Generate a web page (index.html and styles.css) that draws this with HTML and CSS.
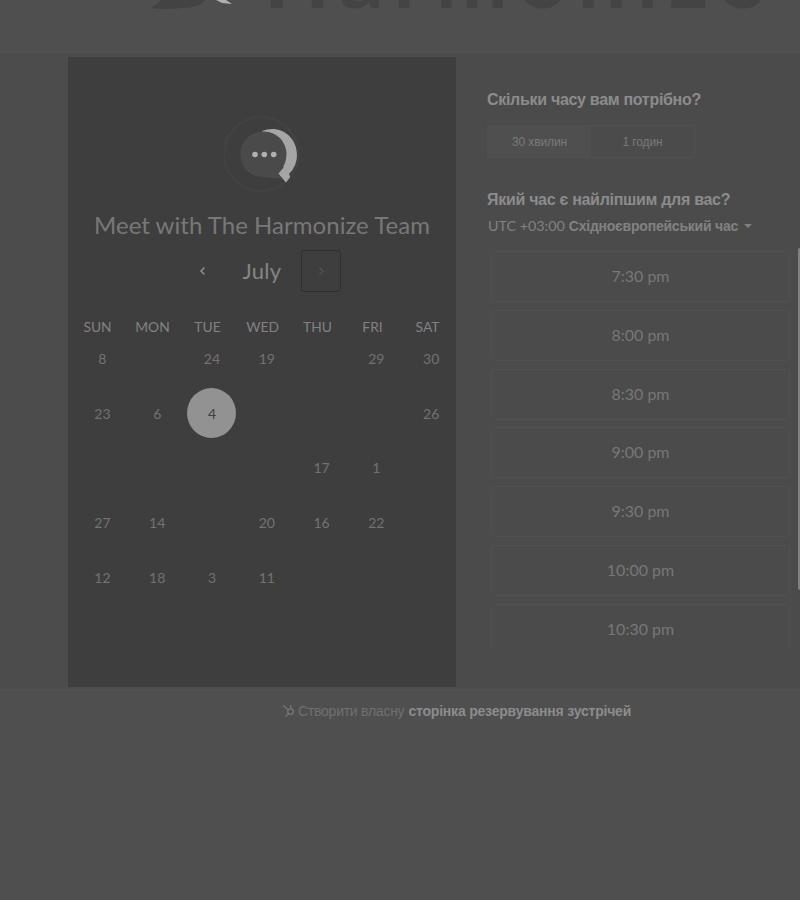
FILE: index.html
```
<!DOCTYPE html>
<html lang="uk">
<head>
<meta charset="utf-8">
<title>Harmonize</title>
<link rel="stylesheet" href="styles.css">
</head>
<body>
<header class="brand">
  <svg class="brand-mark" width="90" height="10" viewBox="0 0 90 10"><path d="M2 8C9 5 11 2 13 0H57C54 5 45 8 34 8Q16 10 2 8Z" fill="#434343"/><path d="M68 0H78L84 4L74 3Z" fill="#b0b0b0"/></svg>
  <span class="brand-name">Harmonize</span>
</header>
<main class="band">
  <div class="widget">
    <section class="calendar">
      <svg class="avatar" width="84" height="84" viewBox="0 0 84 84">
        <circle cx="37" cy="41" r="37" fill="none" stroke="#424242" stroke-width="3"/>
        <path d="M38 18C54 11 73 22 73 42Q73 53 65 61L66 64L62 69L55 61L60 55Z" fill="#a5a5a5"/>
        <path d="M40 18.500A22.500 22.500 0 0 1 62.500 41Q62.500 50 57 57L55 61L58 66Q48 65 38 64A22.700 22.700 0 0 1 40 18.500Z" fill="#4a4a4a"/>
        <path d="M60 54L54.500 60.500L62 69.500L66 64L64 60Z" fill="#a5a5a5"/>
        <g fill="#b0b0b0"><circle cx="31" cy="41.500" r="2.8"/><circle cx="40.300" cy="41.500" r="2.8"/><circle cx="49.700" cy="41.500" r="2.8"/></g>
      </svg>
      <h1 class="title">Meet with The Harmonize Team</h1>
      <div class="month-nav">
        <button class="arrow"><svg width="8" height="10" viewBox="0 0 8 10"><path d="M5.5 1.5L2 5L5.5 8.5"/></svg></button>
        <span class="month">July</span>
        <button class="arrow arrow-next"><svg width="8" height="10" viewBox="0 0 8 10"><path d="M2.5 1.5L6 5L2.5 8.5"/></svg></button>
      </div>
      <div class="weekdays"><span>SUN</span><span>MON</span><span>TUE</span><span>WED</span><span>THU</span><span>FRI</span><span>SAT</span></div>
      <div class="days">
        <span>8</span><span></span><span>24</span><span>19</span><span></span><span>29</span><span>30</span>
        <span>23</span><span>6</span><span class="selected"><b>4</b></span><span></span><span></span><span></span><span>26</span>
        <span></span><span></span><span></span><span></span><span>17</span><span>1</span><span></span>
        <span>27</span><span>14</span><span></span><span>20</span><span>16</span><span>22</span><span></span>
        <span>12</span><span>18</span><span>3</span><span>11</span><span></span><span></span><span></span>
      </div>
    </section>
    <section class="times">
      <h2 class="question">Скільки часу вам потрібно?</h2>
      <div class="durations"><button class="on">30 хвилин</button><button>1 годин</button></div>
      <h2 class="question">Який час є найліпшим для вас?</h2>
      <div class="zone"><span class="offset">UTC +03:00</span><strong>Східноєвропейський час</strong><i class="caret"></i></div>
      <div class="scroller">
        <div class="slots">
          <button>7:30 pm</button><button>8:00 pm</button><button>8:30 pm</button><button>9:00 pm</button><button>9:30 pm</button><button>10:00 pm</button><button>10:30 pm</button>
        </div>
        <div class="thumb"></div>
      </div>
    </section>
  </div>
</main>
<footer class="credit">
  <svg width="13" height="14" viewBox="0 0 13 14"><g fill="none" stroke="#737373" stroke-width="1.4"><circle cx="8.5" cy="7.5" r="2.8"/><path d="M1 1.5L6.2 5.7M8.7 4.5V1M6.5 9.5L3.5 12.5"/></g></svg>
  <span class="make">Створити власну</span><strong>сторінка резервування зустрічей</strong>
</footer>
</body>
</html>
```
FILE: styles.css
```
* { box-sizing: border-box; }
body { margin: 0; height: 900px; overflow: hidden; background: #4f4f4f; color: #858585; font-family: "Liberation Sans", sans-serif; }
button { font: inherit; color: inherit; background: none; border: 0; padding: 0; margin: 0; }
h1, h2 { margin: 0; }

.brand { height: 52px; display: flex; align-items: flex-start; overflow: hidden; padding-left: 148px; }
.brand-mark { flex: none; }
.brand-name { margin: -75px 0 0 26px; font: 700 86px/100px Lato, sans-serif; letter-spacing: 10.3px; color: #444; }

.band { height: 638px; padding: 4px 0 0 68px; background: #4c4c4c; border-top: 1px solid #525252; border-bottom: 1px solid #515151; }
.widget { display: flex; height: 630px; }
.calendar { width: 388px; flex: none; background: #3e3e3e; display: flex; flex-direction: column; align-items: center; padding-top: 56px; font-family: Lato, sans-serif; }
.avatar { flex: none; display: block; margin-left: 8px; }
.title { margin-top: 11px; height: 34px; font-size: 24px; line-height: 34px; font-weight: 400; letter-spacing: 0.03px; color: #787878; white-space: nowrap; }
.month-nav { display: flex; align-items: center; justify-content: center; margin-top: 8px; height: 42px; }
.arrow { width: 40px; height: 42px; display: grid; place-items: center; }
.arrow svg { fill: none; stroke: #8b8b8b; stroke-width: 1.6; }
.arrow-next { border: 1px solid #303030; border-radius: 3px; }
.arrow-next svg { stroke: #555; stroke-width: 1.2; }
.month { width: 78px; text-align: center; font-size: 22px; line-height: 26px; letter-spacing: 0.3px; color: #858585; }
.weekdays { display: grid; grid-template-columns: repeat(7, 55px); align-self: flex-start; margin: 25px 0 0 2px; height: 20px; line-height: 20px; font-size: 13.8px; text-align: center; color: #828282; }
.days { display: grid; grid-template-columns: repeat(7, 54.8px); grid-auto-rows: 54.7px; align-self: flex-start; margin: -6px 0 0 7px; font-size: 14px; color: #727272; }
.days span { display: grid; place-items: center; }
.selected b { width: 49px; height: 50px; display: grid; place-items: center; border-radius: 50%; background: #929292; color: #3e3e3e; font-weight: 400; }

.times { flex: 1; background: #4b4b4b; padding: 31px 0 0 31px; height: 630px; }
.question { font-size: 16px; line-height: 24px; font-weight: 700; letter-spacing: -0.3px; color: #8c8c8c; white-space: nowrap; }
.durations { display: flex; width: 208px; height: 33px; margin: 13px 0 30px; border: 1px solid #505050; font-size: 12px; color: #7a7a7a; }
.durations button { flex: 1; letter-spacing: -0.1px; }
.durations .on { background: #4f4f4f; }
.zone { display: flex; align-items: center; height: 27px; padding-left: 1px; white-space: nowrap; font-size: 14px; color: #828282; }
.zone strong { letter-spacing: -0.22px; }
.offset { font-family: Lato, sans-serif; font-size: 14.3px; margin-right: 4px; }
.caret { margin-left: 6px; border: 4px solid transparent; border-top-color: #808080; border-bottom: 0; }
.scroller { display: flex; height: 409px; margin-top: 9px; overflow: hidden; }
.slots { width: 299px; height: 400px; margin-left: 4px; padding-top: 3px; overflow: hidden; display: flex; flex-direction: column; gap: 7.8px; font-family: Lato, sans-serif; font-size: 16px; letter-spacing: 0.35px; color: #777; }
.slots button { flex: 0 0 51px; padding-bottom: 2px; border: 1px solid #505050; border-radius: 3px; }
.thumb { width: 4px; height: 342px; margin-left: 8px; background: #818181; border-radius: 2px; }

.credit { height: 48px; padding: 0 0 5px 282px; display: flex; align-items: center; font-size: 14px; color: #707070; border-bottom: 1px solid #4d4d4d; white-space: nowrap; }
.credit .make { margin: 0 4px 0 3px; letter-spacing: -0.25px; }
.credit strong { font-size: 14px; letter-spacing: -0.2px; color: #8c8c8c; }
```
